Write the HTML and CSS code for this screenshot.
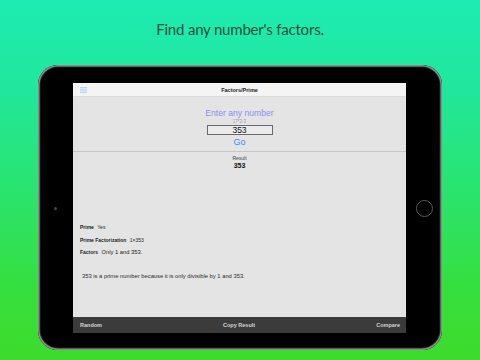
FILE: index.html
```html
<!DOCTYPE html>
<html lang="en">
<head>
    <meta charset="UTF-8">
    <meta name="viewport" content="width=device-width, initial-scale=1.0">
    <title>Factors/Prime</title>
    <link rel="stylesheet" href="styles.css">
</head>
<body>
    <h1 class="tagline">Find any number's factors.</h1>

    <div class="device">
        <div class="bezel bezel-left">
            <span class="camera"></span>
        </div>

        <div class="screen">
            <div class="nav-bar">
                <svg class="menu-icon" width="7" height="6" viewBox="0 0 7 6">
                    <rect x="0" y="0" width="7" height="1.4" fill="#b4d4f6"/>
                    <rect x="0" y="2.3" width="7" height="1.4" fill="#b4d4f6"/>
                    <rect x="0" y="4.6" width="7" height="1.4" fill="#b4d4f6"/>
                </svg>
                <div class="nav-title">Factors/Prime</div>
            </div>

            <div class="entry">
                <div class="entry-label">Enter any number</div>
                <div class="entry-hint">17*2-3</div>
                <div class="entry-input">353</div>
                <div class="entry-go">Go</div>
            </div>

            <div class="result">
                <div class="result-label">Result</div>
                <div class="result-value">353</div>
            </div>

            <div class="details">
                <div class="detail-row"><span class="detail-key">Prime</span> <span class="detail-val">Yes</span></div>
                <div class="detail-row"><span class="detail-key">Prime Factorization</span> <span class="detail-val">1×353</span></div>
                <div class="detail-row"><span class="detail-key">Factors</span> <span class="detail-val detail-big">Only 1 and 353.</span></div>
            </div>

            <p class="explain">353 is a prime number because it is only divisible by 1 and 353.</p>

            <div class="toolbar">
                <span>Random</span>
                <span>Copy Result</span>
                <span>Compare</span>
            </div>
        </div>

        <div class="bezel bezel-right">
            <span class="home-button"></span>
        </div>
    </div>
</body>
</html>
```

FILE: styles.css
```css
* {
    margin: 0;
    padding: 0;
    box-sizing: border-box;
}

body {
    width: 480px;
    height: 360px;
    overflow: hidden;
    font-family: 'Liberation Sans', Arial, sans-serif;
    background: linear-gradient(180deg, #1debb1 0%, #21e79c 25%, #2be36b 55%, #36df3f 80%, #3ddc2b 100%);
}

.tagline {
    padding-top: 19px;
    height: 65px;
    line-height: 20px;
    text-align: center;
    font-family: Lato, 'Open Sans', sans-serif;
    font-size: 15px;
    font-weight: 400;
    letter-spacing: -0.2px;
    color: #17503e;
}

.device {
    width: 404px;
    height: 285px;
    margin: 0 auto;
    display: flex;
    padding: 18px 0 17px;
    background: #000;
    border-radius: 20px;
    box-shadow: inset 0 0 0 1.5px #8c8c8c, inset 0 0 0 2.5px #2a2a2a;
}

.bezel {
    display: flex;
    align-items: center;
    justify-content: center;
}

.bezel-left {
    width: 35px;
}

.bezel-right {
    width: 36px;
}

.camera {
    width: 3px;
    height: 3px;
    border-radius: 50%;
    background: #3a4a66;
}

.home-button {
    width: 17px;
    height: 17px;
    border-radius: 50%;
    border: 1px solid #5a5a5a;
}

.screen {
    flex: 1;
    display: flex;
    flex-direction: column;
    background: #e4e4e4;
}

.nav-bar {
    position: relative;
    height: 14px;
    background: #f4f4f4;
    border-bottom: 1px solid #dadada;
    display: flex;
    align-items: center;
    justify-content: center;
}

.menu-icon {
    position: absolute;
    left: 7px;
    top: 4px;
}

.nav-title {
    font-size: 5.5px;
    font-weight: 700;
    color: #222;
}

.entry {
    display: flex;
    flex-direction: column;
    align-items: center;
    padding-top: 10px;
    padding-bottom: 3px;
    border-bottom: 1px solid #c6c6c6;
}

.entry-label {
    line-height: 12px;
    font-size: 8.6px;
    color: #8f8cf2;
}

.entry-hint {
    line-height: 5px;
    font-size: 4.5px;
    color: #9a9a9a;
}

.entry-input {
    width: 66px;
    height: 10px;
    margin-top: 1px;
    border: 1px solid #6a6a6a;
    background: #ebebeb;
    text-align: center;
    line-height: 8px;
    font-size: 8.5px;
    color: #111;
}

.entry-go {
    margin-top: 1px;
    line-height: 12px;
    font-size: 9px;
    color: #3b8def;
}

.result {
    display: flex;
    flex-direction: column;
    align-items: center;
    padding-top: 3px;
}

.result-label {
    line-height: 6px;
    font-size: 5px;
    color: #444;
}

.result-value {
    margin-top: 1px;
    line-height: 8px;
    font-size: 7px;
    font-weight: 700;
    color: #111;
}

.details {
    margin-top: 51px;
    padding-left: 7px;
    display: flex;
    flex-direction: column;
    gap: 0.5px;
}

.detail-row {
    line-height: 12px;
    font-size: 5px;
    color: #222;
}

.detail-key {
    font-weight: 700;
    margin-right: 2px;
}

.detail-big {
    font-size: 5.8px;
}

.explain {
    margin-top: 13px;
    padding-left: 9px;
    line-height: 10px;
    font-size: 5.8px;
    color: #2a2a2a;
}

.toolbar {
    margin-top: auto;
    height: 16px;
    padding: 0 6px 0 7px;
    background: #3b3b3b;
    display: flex;
    align-items: center;
    justify-content: space-between;
    font-size: 5.5px;
    font-weight: 700;
    color: #d4d4d4;
}
```
